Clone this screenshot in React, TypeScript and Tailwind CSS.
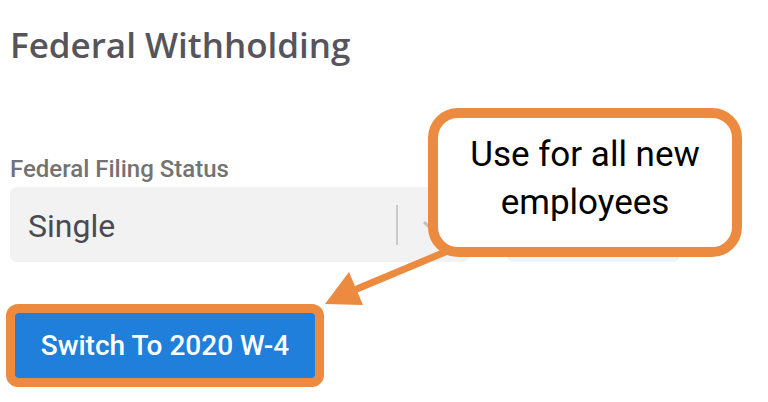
import React from "react";

export default function App() {
  return (
    <div className="relative w-[768px] h-[402px] bg-white overflow-hidden" style={{ fontFamily: "Roboto, 'Liberation Sans', sans-serif" }}>
      <div className="pl-[10px] pt-[21px]">
        <h1
          className="text-[35px] leading-[48px] font-semibold text-[#55555b]"
          style={{ fontFamily: "'Open Sans', 'Noto Sans', sans-serif" }}
        >
          Federal Withholding
        </h1>
        <div className="mt-[86px] text-[24px] leading-[28px] font-medium text-[#737373]">Federal Filing Status</div>
        <div className="mt-[4px] flex gap-[37px]">
          <div className="w-[460px] h-[75px] rounded-[7px] bg-[#f2f2f2] flex items-center pl-[18px]">
            <span className="flex-1 text-[32px] pt-[2px] text-[#4a4a50]">Single</span>
            <div className="w-[2px] h-[40px] bg-[#cacaca]" />
            <svg width="20" height="20" viewBox="0 0 20 20" className="ml-[22px] mr-[30px]">
              <path d="M4 7l6 6 6-6" fill="none" stroke="#c0c0c0" strokeWidth="3" />
            </svg>
          </div>
          <div className="w-[173px] h-[75px] rounded-[7px] bg-[#f2f2f2]" />
        </div>
        <div className="mt-[42px] ml-[-4px] inline-flex border-[9px] border-[#ec8a3f] rounded-[12px]">
          <button className="w-[300px] h-[65px] rounded-[3px] bg-[#1f7fdb] text-white text-[28px] font-medium">
            Switch To 2020 W-4
          </button>
        </div>
      </div>

      <svg className="absolute left-0 top-0" width="768" height="402">
        <line x1="450" y1="250" x2="352" y2="291" stroke="#ec8a3f" strokeWidth="7" />
        <polygon points="325,304 349,272 363,305" fill="#ec8a3f" />
      </svg>

      <div className="absolute left-[428px] top-[108px] w-[314px] h-[149px] rounded-[30px] border-[10px] border-[#ec8a3f] bg-white flex flex-col items-center pt-[13px] text-[35px] leading-[48px] text-black">
        <div>Use for all new</div>
        <div>employees</div>
      </div>
    </div>
  );
}
